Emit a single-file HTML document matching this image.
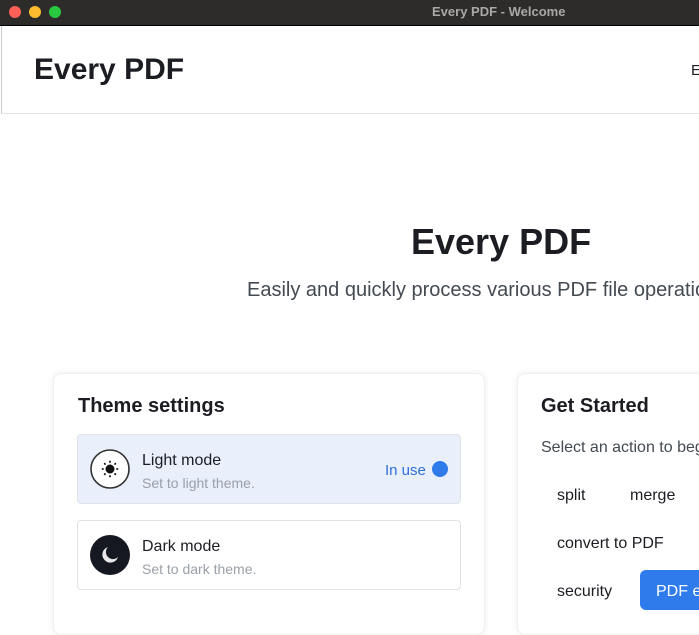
<!DOCTYPE html>
<html><head><meta charset="utf-8"><style>
*{margin:0;padding:0;box-sizing:border-box}
body{width:699px;height:634px;overflow:hidden;background:#fff;font-family:"Liberation Sans",sans-serif;position:relative;color:#1b1d22}
.tb{position:absolute;left:0;top:0;width:699px;height:26px;background:#2d2c2b;border-bottom:1px solid #000}
.dot{position:absolute;top:6px;width:12px;height:12px;border-radius:50%}
.tt{position:absolute;top:4px;left:432px;color:#a9a8a7;font-weight:bold;font-size:13px}
.hdr{position:absolute;left:1px;top:26px;width:698px;height:88px;border-bottom:1px solid #e3e5e8;border-left:1px solid #ccc}
.a{position:absolute;white-space:nowrap}
.card{position:absolute;top:373px;height:262px;background:#fff;border-radius:8px;box-shadow:0 0 6px rgba(0,0,0,.08);border:1px solid #f0f0f0}
.item{position:absolute;left:77px;width:384px;height:70px;border:1px solid #dfe2e6;border-radius:4px}
</style></head><body>
<div class="tb"><div class="dot" style="left:9px;background:#fe5f57"></div><div class="dot" style="left:29px;background:#febc2e"></div><div class="dot" style="left:49px;background:#28c840"></div><div class="tt">Every PDF - Welcome</div></div>
<div class="hdr"></div>
<div class="a" style="left:34px;top:53px;font-size:30px;font-weight:bold">Every PDF</div>
<div class="a" style="left:691px;top:62px;font-size:15px">E</div>
<div class="a" style="left:411px;top:221px;font-size:36px;font-weight:bold">Every PDF</div>
<div class="a" style="left:247px;top:279px;font-size:20px;color:#444a52">Easily and quickly process various PDF file operations</div>
<div class="card" style="left:53px;width:432px"></div>
<div class="card" style="left:517px;width:300px"></div>
<div class="a" style="left:78px;top:395px;font-size:20px;font-weight:bold">Theme settings</div>
<div class="item" style="top:434px;background:#e9f0fb"></div>
<div class="item" style="top:520px;background:#fff"></div>
<svg class="a" style="left:90px;top:449px" width="40" height="40" viewBox="0 0 40 40"><circle cx="20" cy="20" r="19" fill="#fff" stroke="#333" stroke-width="1.6"/><circle cx="20" cy="20" r="4.5" fill="#111"/><g stroke="#111" stroke-width="1.8" stroke-linecap="round"><path d="M20 12.5v.5M20 27v.5M12.5 20h.5M27 20h.5M14.7 14.7l.3.3M25 25l.3.3M14.7 25.3l.3-.3M25 15l.3-.3"/></g></svg>
<div class="a" style="left:142px;top:452px;font-size:16px">Light mode</div>
<div class="a" style="left:142px;top:475px;font-size:14px;color:#9aa0a8">Set to light theme.</div>
<div class="a" style="left:385px;top:462px;font-size:15px;color:#2f6fd6">In use</div>
<div class="a" style="left:432px;top:461px;width:16px;height:16px;border-radius:50%;background:#2f7bec"></div>
<svg class="a" style="left:90px;top:535px" width="40" height="40" viewBox="0 0 40 40"><circle cx="20" cy="20" r="20" fill="#151820"/><path d="M18 12a8 8 0 1 0 10 10a7 7 0 0 1-10-10z" fill="#e8e8e8"/></svg>
<div class="a" style="left:142px;top:538px;font-size:16px">Dark mode</div>
<div class="a" style="left:142px;top:561px;font-size:14px;color:#9aa0a8">Set to dark theme.</div>
<div class="a" style="left:541px;top:395px;font-size:20px;font-weight:bold">Get Started</div>
<div class="a" style="left:541px;top:439px;font-size:16px;color:#444a52">Select an action to begin</div>
<div class="a" style="left:557px;top:487px;font-size:16px">split</div>
<div class="a" style="left:630px;top:487px;font-size:16px">merge</div>
<div class="a" style="left:557px;top:535px;font-size:16px">convert to PDF</div>
<div class="a" style="left:557px;top:583px;font-size:16px">security</div>
<div class="a" style="left:640px;top:570px;width:90px;height:40px;border-radius:6px;background:#2f7bec;color:#fff;font-size:16px;padding:13px 0 0 16px">PDF editor</div>
</body></html>
